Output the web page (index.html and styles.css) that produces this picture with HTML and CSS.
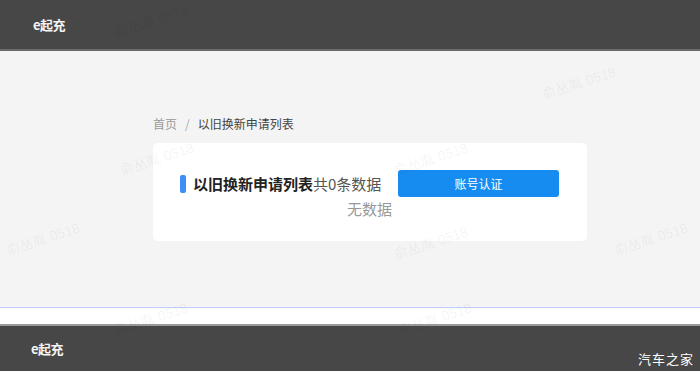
FILE: index.html
```html
<!DOCTYPE html>
<html lang="zh-CN">
<head>
    <meta charset="UTF-8">
    <meta name="viewport" content="width=device-width, initial-scale=1.0">
    <title>以旧换新申请列表</title>
    <link rel="stylesheet" href="styles.css">
</head>
<body>

<div class="page">
    <div class="header">
        <span class="logo">e起充</span>
    </div>

    <div class="main">
        <div class="breadcrumb">
            <span class="crumb-link">首页</span>
            <span class="crumb-sep">/</span>
            <span class="crumb-current">以旧换新申请列表</span>
        </div>

        <div class="card">
            <div class="card-head">
                <span class="bar"></span>
                <span class="card-title">以旧换新申请列表</span>
                <span class="card-count">共0条数据</span>
                <button class="btn-primary">账号认证</button>
            </div>
            <div class="empty">无数据</div>
        </div>
    </div>

    <div class="strip"></div>

    <div class="footer">
        <span class="logo">e起充</span>
    </div>

    <!-- watermark layer -->
    <span class="wm" style="left: 112px; top: 10px;">俞丛胤 0518</span>
    <span class="wm" style="left: 540px; top: 72px;">俞丛胤 0518</span>
    <span class="wm" style="left: 118px; top: 148px;">俞丛胤 0518</span>
    <span class="wm" style="left: 392px; top: 148px;">俞丛胤 0518</span>
    <span class="wm" style="left: 4px; top: 228px;">俞丛胤 0518</span>
    <span class="wm" style="left: 392px; top: 232px;">俞丛胤 0518</span>
    <span class="wm" style="left: 612px; top: 228px;">俞丛胤 0518</span>
    <span class="wm" style="left: 112px; top: 308px;">俞丛胤 0518</span>
    <span class="wm" style="left: 396px; top: 308px;">俞丛胤 0518</span>

    <span class="brand-mark">汽车之家</span>
</div>

</body>
</html>
```

FILE: styles.css
```css
body {
    margin: 0;
    font-family: "Noto Sans CJK SC", "Noto Sans", sans-serif;
    background-color: #f4f4f4;
    overflow: hidden;
}

.page {
    position: relative;
    width: 700px;
    height: 371px;
    overflow: hidden;
}

.header {
    height: 51px;
    box-sizing: border-box;
    background-color: #474747;
    border-bottom: 2px solid #6a6a6a;
    display: flex;
    align-items: center;
    padding-left: 33px;
}

.logo {
    color: #f4f4f4;
    font-size: 13px;
    font-weight: bold;
    letter-spacing: -0.5px;
}

.main {
    height: 257px;
    box-sizing: border-box;
    padding: 63px 0 0 153px;
    background-color: #f4f4f4;
    border-bottom: 1px solid #bcd0f7;
}

.breadcrumb {
    height: 20px;
    line-height: 20px;
    font-size: 12px;
    display: flex;
    gap: 8px;
    margin-bottom: 9px;
}

.crumb-link {
    color: #999;
}

.crumb-sep {
    color: #aaa;
}

.crumb-current {
    color: #444;
}

.card {
    width: 434px;
    height: 98px;
    box-sizing: border-box;
    background-color: #fff;
    border-radius: 5px;
    padding: 27px 28px 0 27px;
}

.card-head {
    display: flex;
    align-items: center;
    height: 27px;
}

.bar {
    width: 6px;
    height: 18px;
    border-radius: 2px;
    background-color: #3d8ff5;
    margin-right: 7px;
}

.card-title {
    font-size: 15px;
    font-weight: bold;
    color: #222;
}

.card-count {
    font-size: 15px;
    color: #555;
}

.btn-primary {
    margin-left: auto;
    width: 161px;
    height: 27px;
    border: none;
    border-radius: 3px;
    background-color: #168cf1;
    color: #fff;
    font-family: inherit;
    font-size: 12px;
    padding: 0;
}

.empty {
    margin-top: 2px;
    text-align: center;
    font-size: 15px;
    line-height: 20px;
    color: #999;
}

.strip {
    height: 16px;
    background-color: #fff;
    border-bottom: 2px solid #9a9a9a;
}

.footer {
    height: 45px;
    background-color: #474747;
    display: flex;
    align-items: center;
    padding-left: 31px;
    box-sizing: border-box;
}

.wm {
    position: absolute;
    font-family: "Liberation Sans", "Noto Sans CJK SC", sans-serif;
    font-size: 14px;
    color: rgba(0, 0, 0, 0.06);
    transform: rotate(-18deg);
    white-space: nowrap;
    pointer-events: none;
}

.brand-mark {
    position: absolute;
    right: 6px;
    bottom: 3px;
    color: #fff;
    font-size: 13px;
    letter-spacing: 1px;
}
```
